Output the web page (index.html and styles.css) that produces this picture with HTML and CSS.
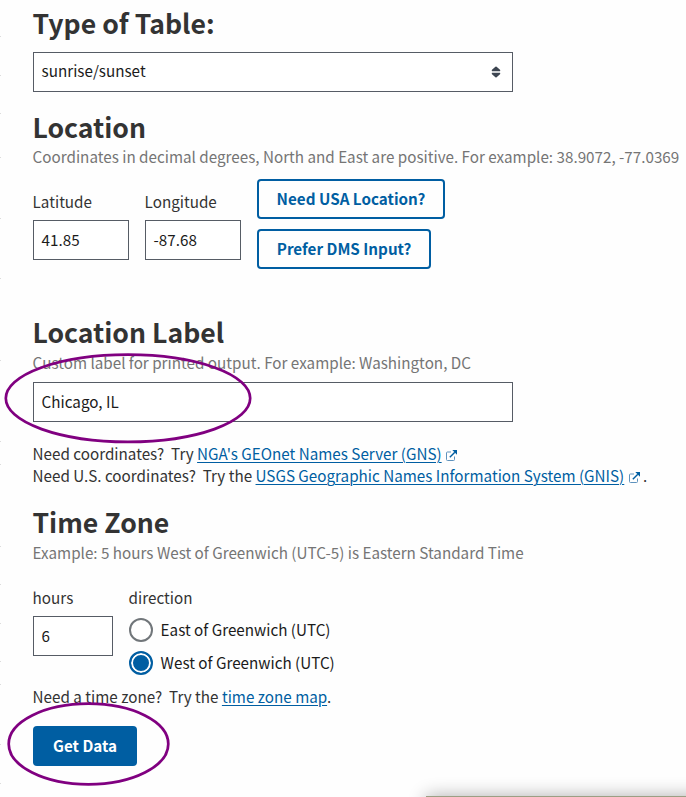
FILE: index.html
```html
<!DOCTYPE html>
<html lang="en">
<head>
<meta charset="utf-8">
<title>Table Data Request</title>
<link rel="stylesheet" href="styles.css">
</head>
<body>
<form class="form">
  <h2 class="heading">Type of Table:</h2>
  <div class="field select">
    <span>sunrise/sunset</span>
    <svg class="arrows" width="10" height="12" viewBox="0 0 10 12"><path d="M1 5.2Q0.4 4.7 1 3.8L4.4.7Q5 .2 5.6.7L9 3.8Q9.6 4.7 9 5.2ZM1 6.8H9Q9.6 7.3 9 8.2L5.6 11.3Q5 11.8 4.4 11.3L1 8.2Q.4 7.3 1 6.8Z" fill="#3d4551"/></svg>
  </div>

  <h2 class="heading location">Location</h2>
  <p class="hint coords-hint">Coordinates in decimal degrees, North and East are positive. For example: 38.9072, -77.0369</p>
  <div class="coords">
    <div class="group">
      <label class="label">Latitude</label>
      <div class="field coord">41.85</div>
    </div>
    <div class="group">
      <label class="label">Longitude</label>
      <div class="field coord">-87.68</div>
    </div>
    <div class="actions">
      <button type="button" class="button outline usa">Need USA Location?</button>
      <button type="button" class="button outline dms">Prefer DMS Input?</button>
    </div>
  </div>

  <h2 class="heading place">Location Label</h2>
  <p class="hint place-hint">Custom label for printed output. For example: Washington, DC</p>
  <div class="field place-field">Chicago, IL</div>
  <div class="resources">
    <p class="text">Need coordinates?&nbsp; Try <a class="link">NGA's GEOnet Names Server (GNS)</a><svg class="external" width="11" height="11" viewBox="0 0 11 11"><path d="M5 2H1.4Q.5 2 .5 2.9V9.6Q.5 10.5 1.4 10.5H7.6Q8.5 10.5 8.5 9.6V6.5" fill="none" stroke="#5e92bd"/><path d="M3.8 7.2 8.8 2.2" stroke="#005ea2" stroke-width="1.4"/><path d="M6.3 0H11V4.7Z" fill="#005ea2"/></svg></p>
    <p class="text">Need U.S. coordinates?&nbsp; Try the <a class="link">USGS Geographic Names Information System (GNIS)</a><svg class="external" width="11" height="11" viewBox="0 0 11 11"><path d="M5 2H1.4Q.5 2 .5 2.9V9.6Q.5 10.5 1.4 10.5H7.6Q8.5 10.5 8.5 9.6V6.5" fill="none" stroke="#5e92bd"/><path d="M3.8 7.2 8.8 2.2" stroke="#005ea2" stroke-width="1.4"/><path d="M6.3 0H11V4.7Z" fill="#005ea2"/></svg> .</p>
  </div>

  <h2 class="heading zone">Time Zone</h2>
  <p class="hint zone-hint">Example: 5 hours West of Greenwich (UTC-5) is Eastern Standard Time</p>
  <div class="zone-row">
    <div class="group">
      <label class="label">hours</label>
      <div class="field hours">6</div>
    </div>
    <div class="group">
      <span class="label">direction</span>
      <div class="radios">
        <label class="radio"><span class="dot"></span><span class="choice">East of Greenwich (UTC)</span></label>
        <label class="radio"><span class="dot checked"></span><span class="choice">West of Greenwich (UTC)</span></label>
      </div>
    </div>
  </div>
  <p class="text map">Need a time zone?&nbsp; Try the <a class="link">time zone map</a>.</p>
  <button type="button" class="button primary">Get Data</button>
</form>

<svg class="overlay" width="686" height="797" viewBox="0 0 686 797">
  <g fill="none" stroke="#800080" stroke-width="2.7">
    <ellipse cx="128" cy="398.3" rx="122.2" ry="43.6"/>
    <ellipse cx="88.5" cy="744" rx="79.8" ry="40.3"/>
  </g>
  <path d="M.5 36v1m0 38v1m0 37v1m0 43v1m0 60v1m0 59v1m0 81v1m0 80v1m0 22v1m0 81v1m0 37v1m0 38v1m0 37v1m0 22v1m0 59v1m0 38v1" stroke="#dcdcdc"/>
</svg>
<div class="window-edge"></div>
</body>
</html>
```
FILE: styles.css
```css
* { box-sizing: border-box; }

body {
  margin: 0;
  height: 797px;
  position: relative;
  overflow: hidden;
  background: #fefefe;
  color: #333;
  font: 15.22px/22px "Noto Sans CJK SC", "Open Sans", sans-serif;
}

.form { padding: 7px 0 0 33px; width: 686px; }

.heading { margin: 0 0 0 -0.5px; font-size: 26.6px; line-height: 32px; font-weight: 700; white-space: nowrap; }
.location { margin-top: 19px; }
.place { margin-top: 47px; }
.zone { margin-top: 20px; }

.hint, .text { margin: 0 0 0 -0.4px; white-space: nowrap; }
.hint { color: #757575; }
.coords-hint { margin-top: 2px; }
.place-hint { margin-top: 3px; }
.zone-hint { margin-top: 3px; }

.field {
  display: flex;
  align-items: center;
  width: 480px;
  height: 40px;
  padding: 0 7.6px 2px;
  border: 1px solid #565c65;
  background: #fff;
  color: #1b1b1b;
}
.select { justify-content: space-between; margin-top: 13px; padding-right: 11px; padding-bottom: 4px; }
.arrows { margin-top: 3px; }
.place-field { margin-top: 9px; }
.coord { width: 96px; }
.hours { width: 80px; }

.group { display: flex; flex-direction: column; gap: 8px; }
.label { display: block; margin-left: -0.4px; }

.coords { display: flex; gap: 16px; margin-top: 12px; height: 90px; }
.coords .group { margin-top: 11px; }
.actions { display: flex; flex-direction: column; gap: 10px; align-items: flex-start; }

.button {
  height: 40px;
  padding: 0 0 2px;
  border: 0;
  border-radius: 4px;
  font: inherit;
  font-weight: 700;
  line-height: 22px;
  white-space: nowrap;
}
.outline { background: transparent; color: #005ea2; box-shadow: inset 0 0 0 2px #005ea2; }
.usa { width: 188px; }
.dms { width: 174px; }
.primary { display: block; width: 104px; margin-top: 19px; background: #005ea2; color: #fff; }

.resources { margin-top: 20px; }
.link { color: #005ea2; text-decoration: underline; text-decoration-thickness: 1px; text-underline-offset: 2px; }
.external { margin: 0 0 -1px 4.4px; }

.zone-row { display: flex; gap: 16px; margin-top: 23px; height: 90px; }
.radios { display: flex; flex-direction: column; gap: 9px; margin-top: 2px; }
.radio { display: flex; align-items: center; gap: 8px; height: 24px; color: #1b1b1b; white-space: nowrap; }
.choice { padding-bottom: 2px; margin-left: -0.4px; }
.dot { width: 24px; height: 24px; border: 2px solid #71767a; border-radius: 50%; background: #fff; }
.checked { border-color: #005ea2; background: #005ea2; box-shadow: inset 0 0 0 2px #fff; }
.map { margin-top: 9px; }

.overlay { position: absolute; top: 0; left: 0; }
.window-edge {
  position: absolute;
  left: 426px;
  top: 796px;
  width: 260px;
  height: 1px;
  background: #9b9f84;
  box-shadow: 20px 20px 18px 20px rgba(0, 0, 0, .32);
}
```
